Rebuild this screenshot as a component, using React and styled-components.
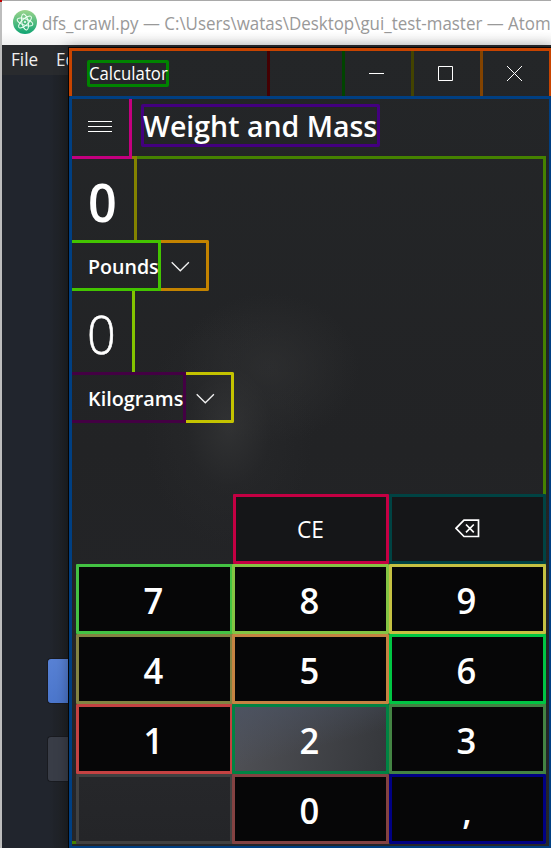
import React from "react";
import styled, { createGlobalStyle } from "styled-components";

const Global = createGlobalStyle`
  * { box-sizing: border-box; }
  html, body { margin: 0; padding: 0; overflow: hidden; background: #21252b; }
  body { font-family: "Open Sans", "Noto Sans", sans-serif; color: #fff; }
`;

const Desktop = styled.div`
  position: relative;
  width: 551px;
  height: 848px;
  overflow: hidden;
`;

const CornerMark = styled.i`
  position: absolute;
  left: 0;
  top: 0;
  width: 2px;
  height: 2px;
  background: #c40000;
`;

const Editor = styled.div`
  height: 848px;
  display: flex;
  flex-direction: column;
  border-top: 1px solid #a9a9a9;
  border-left: 2px solid #bdbdbd;
  background: #21252c;
`;

const EditorTitle = styled.header`
  height: 44px;
  flex: none;
  display: flex;
  align-items: center;
  gap: 5px;
  padding-left: 11px;
  background: linear-gradient(#fff 70%, #f0f0f0);
  white-space: nowrap;
  svg { flex: none; margin-top: -2px; }
`;

const EditorName = styled.span`
  font-size: 18px;
  line-height: 44px;
  color: #999;
  transform: scaleX(${(p) => p.$stretch});
  transform-origin: left;
`;

const MenuBar = styled.nav`
  height: 30px;
  flex: none;
  display: flex;
  gap: 18px;
  padding-left: 9px;
  background: #292b2e;
  font-size: 18px;
  line-height: 28px;
  color: #f0f0f0;
`;

const MenuItem = styled.span`
  width: 27px;
  white-space: nowrap;
  transform: scaleX(0.95);
  transform-origin: left;
`;

const EditorBody = styled.main`
  flex: 1;
  display: flex;
  flex-direction: column;
  gap: 32px;
  width: 67px;
  padding: 583px 0 0 45px;
  background: linear-gradient(90deg, #21252d 70%, #1e2023);
`;

const DialogButton = styled.div`
  height: 46px;
  flex: none;
  border: 1px solid #191b20;
  border-right: 0;
  border-radius: 4px 0 0 4px;
  background: ${(p) => (p.$primary ? "linear-gradient(#5881d4, #4b76cc)" : "#393d47")};
`;

const Calculator = styled.section`
  position: absolute;
  left: 68px;
  top: 47px;
  width: 484px;
  height: 802px;
  border: solid #050505;
  border-width: 1px 0 0 1px;
  box-shadow: 0 0 12px rgba(0, 0, 0, 0.35);
  background:
    radial-gradient(ellipse 85px 120px at 160px 380px, rgba(56, 57, 58, 0.65), rgba(42, 43, 45, 0.35) 50%, rgba(36, 37, 39, 0) 100%),
    radial-gradient(ellipse 90px 75px at 200px 320px, rgba(52, 53, 54, 0.55), rgba(36, 37, 39, 0) 100%),
    linear-gradient(#242628, #222325 50%, #25262a);
`;

const TitleBar = styled.div`
  height: 48px;
  display: flex;
  border: 3px solid #c84400;
  border-bottom: 0;
  width: 483px;
`;

const TitleArea = styled.div`
  width: 198px;
  padding: 9px 0 0 15px;
  border-right: 3px solid #440002;
  flex: none;
`;

const TitleLabel = styled.div`
  width: 82px;
  height: 27px;
  border: 3px solid #008300;
  border-radius: 2px;
  font-size: 18px;
  line-height: 21px;
  white-space: nowrap;
`;

const DragArea = styled.div`
  width: 75px;
  flex: none;
  border-right: 3px solid #004400;
`;

const Caption = styled.button`
  width: ${(p) => p.$width}px;
  flex: none;
  display: flex;
  align-items: center;
  padding: 0 0 0 24px;
  border: 0;
  border-right: ${(p) => (p.$line ? `3px solid ${p.$line}` : "0")};
  background: none;
  color: #fff;
  svg { flex: none; }
`;

const Body = styled.div`
  width: 483px;
  height: 753px;
  border: 3px solid #003f82;
  border-radius: 2px;
`;

const Header = styled.header`
  height: 57px;
  display: flex;
  align-items: flex-start;
  gap: 9px;
`;

const MenuButton = styled.button`
  width: 60px;
  height: 60px;
  position: relative;
  z-index: 1;
  display: flex;
  padding: 22px 0 0 16px;
  border: solid #c4007f;
  border-width: 0 3px 3px 0;
  background: none;
  color: #fff;
`;

const Heading = styled.h1`
  margin: 5px 0 0;
  width: 239px;
  height: 43px;
  border: 3px solid #43007f;
  border-radius: 2px;
  font-size: 28px;
  line-height: 39px;
  font-weight: 600;
  white-space: nowrap;
`;

const Fit = styled.span`
  display: inline-block;
  transform: scaleX(${(p) => p.$x});
  transform-origin: ${(p) => p.$origin || "left"};
  margin-left: ${(p) => p.$shift || 0}px;
`;

const Converter = styled.div`
  width: 474px;
  height: 688px;
  border: solid #458200;
  border-width: 3px 3px 3px 0;
`;

const Value = styled.div`
  width: ${(p) => p.$width}px;
  height: ${(p) => p.$height}px;
  margin-top: ${(p) => p.$lift}px;
  border: solid ${(p) => p.$line};
  border-width: 3px 3px 0 0;
  padding-left: ${(p) => p.$indent}px;
  font-size: 53px;
  line-height: 85px;
  font-weight: ${(p) => p.$weight};
  -webkit-text-stroke: ${(p) => (p.$weight < 400 ? "0.6px #fff" : "0")};
`;

const UnitRow = styled.div`
  display: flex;
  height: 51px;
`;

const UnitName = styled.div`
  width: ${(p) => p.$width}px;
  border: 3px solid ${(p) => p.$line};
  border-left: 0;
  padding-left: 16px;
  font-size: 20px;
  line-height: 48px;
  font-weight: 600;
  white-space: nowrap;
`;

const UnitArrow = styled.div`
  width: 48px;
  display: flex;
  padding: 18px 0 0 10px;
  border: 3px solid ${(p) => p.$line};
  border-left: 0;
  border-radius: 0 2px 2px 0;
`;

const Keypad = styled.div`
  display: grid;
  grid-template-columns: 156px 157px 157px;
  grid-template-rows: repeat(5, 70px);
  width: 470px;
  margin: 71px 0 0 4px;
`;

const Key = styled.button`
  height: 70px;
  width: 157px;
  display: flex;
  align-items: center;
  justify-content: center;
  border: 3px solid ${(p) => p.$line};
  border-radius: 1px;
  padding: 3px 2px 0 0;
  background: ${(p) => p.$fill || "#060607"};
  color: #fff;
  font: 600 36px "Open Sans", "Noto Sans", sans-serif;
`;

const FunctionKey = styled(Key)`
  width: ${(p) => p.$width}px;
  justify-self: end;
  padding: 0 0 1px;
  font-size: 23px;
  font-weight: 400;
`;

const AtomLogo = () => (
  <svg width="24" height="24" viewBox="0 0 24 24">
    <defs>
      <linearGradient id="atom" x2="0" y2="1">
        <stop stopColor="#9bd58c" />
        <stop offset="1" stopColor="#10a473" />
      </linearGradient>
    </defs>
    <circle cx="12" cy="12" r="12" fill="url(#atom)" />
    <g fill="none" stroke="#effff4" strokeWidth="1">
      <ellipse cx="12" cy="12" rx="3.2" ry="8.2" transform="rotate(-12 12 12)" />
      <ellipse cx="12" cy="12" rx="3.2" ry="8.2" transform="rotate(48 12 12)" />
      <ellipse cx="12" cy="12" rx="3.2" ry="8.2" transform="rotate(108 12 12)" />
    </g>
    <circle cx="12" cy="12" r="1" fill="#fff" />
  </svg>
);

const CaptionIcon = ({ d }) => (
  <svg width="15" height="15" viewBox="0 0 15 15" fill="none" stroke="#fff">
    <path d={d} />
  </svg>
);

const Chevron = () => (
  <svg width="19" height="12" viewBox="0 0 19 12" fill="none" stroke="#f2f2f2" strokeWidth="1.3">
    <path d="M.7 1.2 9.3 9.8 17.9 1.2" />
  </svg>
);

const Backspace = () => (
  <svg width="26" height="20" viewBox="0 0 26 20" fill="none" stroke="#fff" strokeWidth="1.7">
    <path d="M9 1.2H23.5V17.5H9L1 9.3ZM11 5.5 18.8 13.3M18.8 5.5 11 13.3" />
  </svg>
);

const keys = [
  ["7", "#43c243"], ["8", "#84c443"], ["9", "#c5c142"],
  ["4", "#838342"], ["5", "#c58342"], ["6", "#00c543"],
  ["1", "#c54242"], ["2", "#008343", "linear-gradient(165deg, rgba(75,84,103,.65), transparent 60%), linear-gradient(100deg, #505156, #35373b)"], ["3", "#438343"],
  ["", "#414141", "linear-gradient(#26272a, #242528)"], ["0", "#834242"], [",", "#000083"],
];

export default function App() {
  return (
    <Desktop>
      <Global />
      <Editor>
        <EditorTitle>
          <AtomLogo />
          <EditorName $stretch={0.94}>dfs_crawl.py — C:\Users\watas\Desktop\gui_test-master — Atom</EditorName>
        </EditorTitle>
        <MenuBar>
          <MenuItem>File</MenuItem>
          <MenuItem>Edit</MenuItem>
        </MenuBar>
        <EditorBody>
          <DialogButton $primary />
          <DialogButton />
        </EditorBody>
      </Editor>
      <CornerMark />
      <Calculator>
        <TitleBar>
          <TitleArea>
            <TitleLabel><Fit $x={0.93} $shift={-1}>Calculator</Fit></TitleLabel>
          </TitleArea>
          <DragArea />
          <Caption $width={69} $line="#434300"><CaptionIcon d="M0 7.5H15" /></Caption>
          <Caption $width={69} $line="#834300"><CaptionIcon d="M.5 .5H14.5V14.5H.5Z" /></Caption>
          <Caption $width={66}><CaptionIcon d="M0 0 15 15M15 0 0 15" /></Caption>
        </TitleBar>
        <Body>
          <Header>
            <MenuButton>
              <svg width="24" height="11" viewBox="0 0 24 11" stroke="#fff">
                <path d="M0 .5H24M0 5.5H24M0 10.5H24" />
              </svg>
            </MenuButton>
            <Heading><Fit $x={1.018} $shift={-1}>Weight and Mass</Fit></Heading>
          </Header>
          <Converter>
            <Value $width={65} $height={84} $lift={-3} $indent={16} $line="#838200" $weight={600}><Fit $x={0.95}>0</Fit></Value>
            <UnitRow>
              <UnitName $width={89} $line="#43c400"><Fit $x={0.98}>Pounds</Fit></UnitName>
              <UnitArrow $line="#c48300"><Chevron /></UnitArrow>
            </UnitRow>
            <Value $width={63} $height={84} $lift={-3} $indent={15} $line="#83c400" $weight={300}><Fit $x={0.95}>0</Fit></Value>
            <UnitRow>
              <UnitName $width={114} $line="#430043"><Fit $x={0.99}>Kilograms</Fit></UnitName>
              <UnitArrow $line="#c4c300"><Chevron /></UnitArrow>
            </UnitRow>
            <Keypad>
              <span />
              <FunctionKey $width={156} $line="#c40043" $fill="#151618"><Fit $x={0.99}>CE</Fit></FunctionKey>
              <FunctionKey $width={157} $line="#004343" $fill="#151618"><Backspace /></FunctionKey>
              {keys.map(([label, line, fill], i) => (
                <Key key={i} $line={line} $fill={fill}><Fit $x={0.96} $origin="center">{label}</Fit></Key>
              ))}
            </Keypad>
          </Converter>
        </Body>
      </Calculator>
    </Desktop>
  );
}
